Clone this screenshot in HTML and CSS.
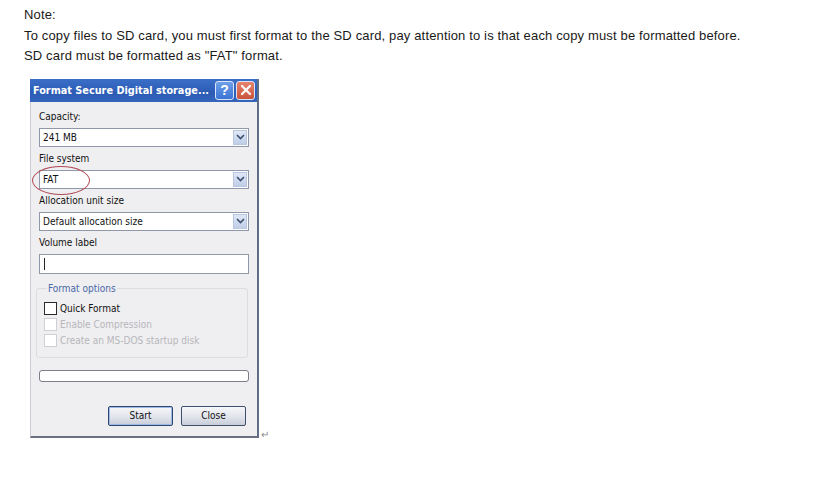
FILE: index.html
```html
<!DOCTYPE html>
<html>
<head>
<meta charset="utf-8">
<link rel="stylesheet" href="styles.css">
</head>
<body>
<div class="note">
  <p>Note:</p>
  <p>To copy files to SD card, you must first format to the SD card, pay attention to is that each copy must be formatted before.</p>
  <p>SD card must be formatted as "FAT" format.</p>
</div>
<div class="figure">
  <div class="dialog">
    <div class="titlebar">
      <span class="title">Format Secure Digital storage...</span>
      <span class="tbtn help">?</span>
      <span class="tbtn close">
        <svg width="12" height="12" viewBox="0 0 12 12"><path d="M2 2 L10 10 M10 2 L2 10" stroke="#fff" stroke-width="2.2" stroke-linecap="round"/></svg>
      </span>
    </div>
    <div class="body">
      <div class="field">
        <div class="label">Capacity:</div>
        <div class="select"><span>241 MB</span><span class="arrow"><svg width="9" height="6" viewBox="0 0 9 6"><path d="M1 1 L4.5 4.5 L8 1" stroke="#3d4f6e" stroke-width="1.6" fill="none"/></svg></span></div>
      </div>
      <div class="field">
        <div class="label">File system</div>
        <div class="select"><span>FAT</span><span class="arrow"><svg width="9" height="6" viewBox="0 0 9 6"><path d="M1 1 L4.5 4.5 L8 1" stroke="#3d4f6e" stroke-width="1.6" fill="none"/></svg></span><span class="circle"></span></div>
      </div>
      <div class="field">
        <div class="label">Allocation unit size</div>
        <div class="select"><span>Default allocation size</span><span class="arrow"><svg width="9" height="6" viewBox="0 0 9 6"><path d="M1 1 L4.5 4.5 L8 1" stroke="#3d4f6e" stroke-width="1.6" fill="none"/></svg></span></div>
      </div>
      <div class="field">
        <div class="label">Volume label</div>
        <div class="textbox"><span class="caret"></span></div>
      </div>
      <fieldset class="group">
        <legend>Format options</legend>
        <div class="check"><span class="box"></span>Quick Format</div>
        <div class="check disabled"><span class="box"></span>Enable Compression</div>
        <div class="check disabled"><span class="box"></span>Create an MS-DOS startup disk</div>
      </fieldset>
      <div class="progress"></div>
      <div class="buttons">
        <span class="btn default">Start</span>
        <span class="btn">Close</span>
      </div>
    </div>
  </div>
  <span class="para">&#8629;</span>
</div>
</body>
</html>
```

FILE: styles.css
```css
html, body {
  margin: 0;
  padding: 0;
  background: #ffffff;
}
body {
  padding: 5px 0 0 24px;
  font-family: "Liberation Sans", Arial, sans-serif;
}
.note p {
  margin: 0;
  font-size: 13px;
  line-height: 20.5px;
  letter-spacing: 0.15px;
  color: #1a1a1a;
}
.figure {
  margin-top: 12px;
  margin-left: 6px;
  display: flex;
  align-items: flex-end;
}
.dialog {
  width: 226px;
  background: #efeef0;
  border-left: 1px solid #c9ccd6;
  border-right: 2px solid #5f6f86;
  border-bottom: 2px solid #6a7080;
  font-family: "DejaVu Sans Condensed", "DejaVu Sans", sans-serif;
  font-size: 10px;
  color: #111;
}
.titlebar {
  height: 23px;
  background: linear-gradient(#3a6fc8, #2c5bb4 60%, #3466be);
  display: flex;
  align-items: center;
  padding: 0 2px 0 3px;
  margin-left: -1px;
}
.title {
  flex: 1;
  min-width: 0;
  white-space: nowrap;
  color: #fff;
  font-weight: bold;
  font-size: 10.8px;
  font-stretch: condensed;
}
.tbtn {
  width: 17px;
  height: 17px;
  flex: none;
  border: 1px solid #d9e4f6;
  border-radius: 3px;
  display: flex;
  align-items: center;
  justify-content: center;
  color: #fff;
  font-weight: bold;
  font-size: 14px;
  font-family: "Liberation Sans", Arial, sans-serif;
  margin-left: 2px;
}
.help {
  background: linear-gradient(#6fa0e8, #3b73d6);
}
.close {
  background: linear-gradient(#e6836b, #c9553b);
}
.body {
  padding: 9px 8px 10px 8px;
  display: flex;
  flex-direction: column;
}
.field {
  display: flex;
  flex-direction: column;
  margin-bottom: 6px;
}
.label {
  height: 12px;
  line-height: 12px;
  margin-bottom: 5px;
}
.select, .textbox {
  position: relative;
  height: 17px;
  border: 1px solid #8f97a8;
  background: #fff;
  display: flex;
  align-items: center;
  justify-content: space-between;
  padding-left: 3px;
}
.arrow {
  width: 14px;
  height: 15px;
  margin-right: 1px;
  background: linear-gradient(#dfe8f7, #bfcde6);
  border: 1px solid #b8c6df;
  box-sizing: border-box;
  display: flex;
  align-items: center;
  justify-content: center;
}
.circle {
  position: absolute;
  left: -8px;
  top: -5px;
  width: 56px;
  height: 27px;
  border: 1px solid #b04a55;
  border-radius: 50%;
}
.textbox {
  height: 18px;
}
.caret {
  width: 1px;
  height: 12px;
  background: #222;
  margin-left: 1px;
}
.group {
  margin: 3px 1px 0 -3px;
  border: 1px solid #dcdbe0;
  border-radius: 3px;
  padding: 8px 9px 10px 7px;
  display: flex;
  flex-direction: column;
  gap: 3px;
}
.group legend {
  color: #4a69a8;
  padding: 0 1px;
  margin-left: 3px;
}
.check {
  display: flex;
  align-items: center;
  height: 13px;
}
.box {
  width: 11px;
  height: 11px;
  border: 1px solid #2a2a2a;
  background: #fff;
  margin-right: 3px;
}
.disabled {
  color: #b7b7bd;
}
.disabled .box {
  border-color: #cfd0d6;
}
.progress {
  margin-top: 12px;
  height: 10px;
  border: 1px solid #7a7f8b;
  border-radius: 3px;
  background: #fff;
}
.buttons {
  display: flex;
  justify-content: flex-end;
  gap: 8px;
  margin-top: 24px;
  margin-right: 3px;
}
.btn {
  width: 63px;
  height: 18px;
  border: 1px solid #3f4e6a;
  border-radius: 2px;
  background: linear-gradient(#f6f7fa, #dfe2ea 60%, #c8cdd9);
  display: flex;
  align-items: center;
  justify-content: center;
}
.btn.default {
  border: 1px solid #32476d;
  box-shadow: inset 0 0 0 1px #9db9e6;
}
.para {
  font-size: 10px;
  color: #8a8a8a;
  margin-left: 2px;
  margin-bottom: -2px;
}
```
